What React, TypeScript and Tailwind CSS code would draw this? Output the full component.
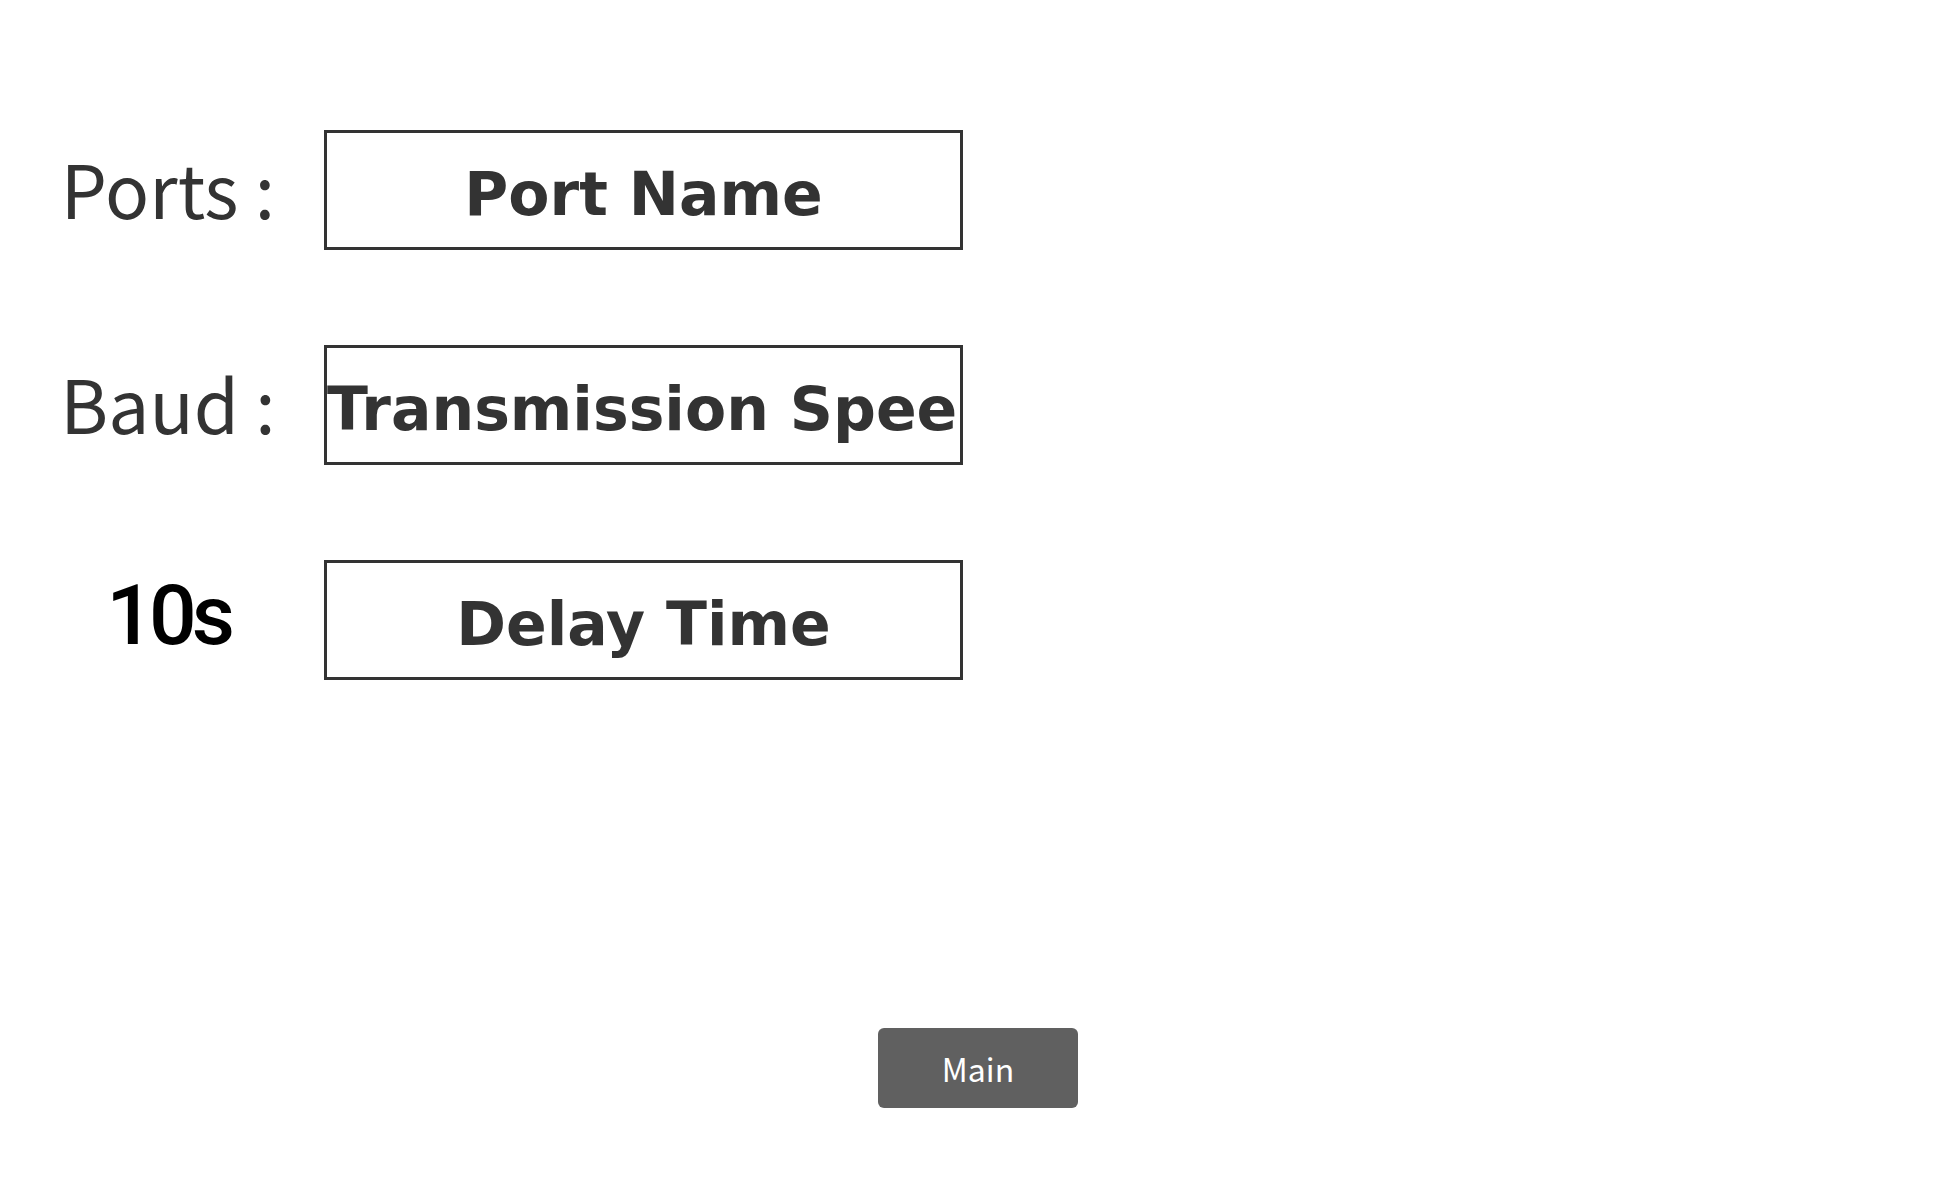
const fields = [
  { label: "Ports :", value: "Port Name" },
  { label: "Baud :", value: "Transmission Speed" },
  { label: "10s", value: "Delay Time", strong: true },
];

function FieldRow({ label, value, strong }: { label: string; value: string; strong?: boolean }) {
  return (
    <div className="flex items-center gap-[36px]">
      <div
        className={
          strong
            ? "w-[240px] pb-[8px] text-center text-[84px] leading-none font-medium tracking-[-5px] text-black font-['Roboto',sans-serif]"
            : "w-[240px] pb-[6px] text-center text-[73px] leading-none text-[#333333] font-['Noto_Sans_CJK_KR',sans-serif]"
        }
      >
        {label}
      </div>
      <div className="w-[639px] h-[120px] border-[3px] border-[#333333] overflow-hidden whitespace-nowrap text-center flex items-center">
        <span className="w-full pt-[8px] text-[60px] leading-none font-bold text-[#333333] font-['DejaVu_Sans',sans-serif]">
          {value}
        </span>
      </div>
    </div>
  );
}

export default function App() {
  return (
    <div className="w-[1956px] h-[1200px] bg-white flex flex-col">
      <div className="flex flex-col gap-[95px] pl-[48px] pt-[130px]">
        {fields.map((f) => (
          <FieldRow key={f.label} label={f.label} value={f.value} strong={f.strong} />
        ))}
      </div>
      <div className="flex justify-center mt-[348px]">
        <button className="w-[200px] h-[80px] rounded-[6px] bg-[#606060] text-white text-[32px] leading-none font-['Noto_Sans_CJK_KR',sans-serif]">
          Main
        </button>
      </div>
    </div>
  );
}
